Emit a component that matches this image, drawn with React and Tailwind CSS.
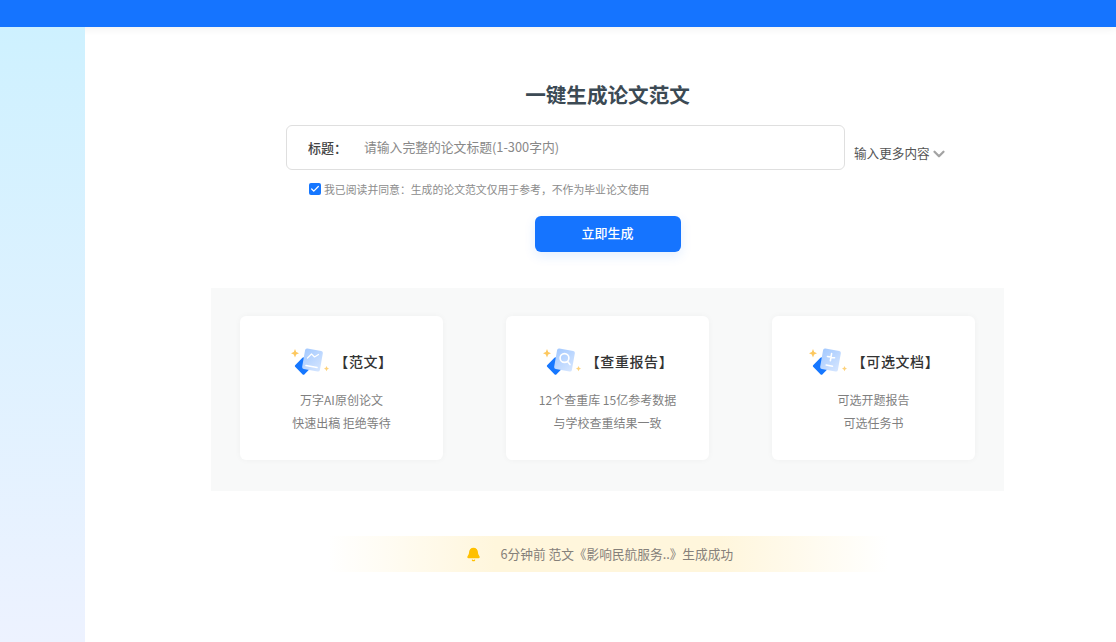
import { Bell, Check, ChevronDown } from 'lucide-react';

const cjk = { fontFamily: '"Noto Sans CJK SC", "Noto Sans", sans-serif' };

// 卡片图标：后面蓝色方块 + 前面浅蓝卡片 + 两个星星
function CardIcon({ kind }) {
    return (
        <svg width="40" height="28" viewBox="0 0 40 28" className="shrink-0">
            <defs>
                <linearGradient id={`card-${kind}`} x1="0" y1="0" x2="1" y2="1">
                    <stop offset="0" stopColor="#a3c9ff" />
                    <stop offset="1" stopColor="#d6e6ff" />
                </linearGradient>
            </defs>
            <path d="M5 2 L6.2 5 L9 6.2 L6.2 7.4 L5 10.4 L3.8 7.4 L1 6.2 L3.8 5 Z" fill="#fdc85f" />
            <path d="M36.5 19 L37.3 20.8 L39 21.6 L37.3 22.4 L36.5 24.2 L35.7 22.4 L34 21.6 L35.7 20.8 Z" fill="#fdd27c" />
            <rect x="7" y="12.5" width="13" height="13" rx="1.5" transform="rotate(45 13.5 19)" fill="#1677ff" />
            <rect x="13.5" y="2.5" width="18" height="21" rx="2" transform="rotate(10 22.5 13)" fill={`url(#card-${kind})`} />
            {kind === 'chart' && (
                <g fill="none" stroke="#fff" strokeWidth="1.2" strokeLinecap="round" strokeLinejoin="round">
                    <path d="M17.5 11 L21.5 7 L24.5 10 L28.5 7.5" />
                    <path d="M16 18.5 L27 20.5" strokeWidth="1.6" />
                </g>
            )}
            {kind === 'search' && (
                <g fill="none" stroke="#fff" strokeWidth="1.6" strokeLinecap="round">
                    <circle cx="22.5" cy="11" r="4.4" />
                    <path d="M25.6 14.6 L28 17.6" />
                </g>
            )}
            {kind === 'plus' && (
                <g fill="none" stroke="#fff" strokeWidth="1.6" strokeLinecap="round">
                    <path d="M19.5 9.5 L26.5 10.8 M23.6 6.6 L22.4 13.7" />
                    <path d="M18.2 18 L24.5 19.2" />
                </g>
            )}
        </svg>
    );
}

const cards = [
    { kind: 'chart', title: '【范文】', lines: ['万字AI原创论文', '快速出稿 拒绝等待'] },
    { kind: 'search', title: '【查重报告】', lines: ['12个查重库 15亿参考数据', '与学校查重结果一致'] },
    { kind: 'plus', title: '【可选文档】', lines: ['可选开题报告', '可选任务书'] },
];

export default function App() {
    return (
        <div className="flex flex-col h-[642px] overflow-hidden bg-white" style={cjk}>
            {/* 顶部栏 */}
            <div className="h-[27px] shrink-0 bg-[#1574ff] shadow-[0_2px_8px_rgba(0,0,0,0.06)]" />

            <div className="flex flex-1">
                {/* 左侧渐变栏 */}
                <div className="relative w-[85px] shrink-0 bg-gradient-to-b from-[#cef1ff] to-[#edf2ff]" />

                {/* 主内容 */}
                <div className="flex-1 pl-[126px]">
                    <div className="w-[793px]">
                        <h1 className="mt-[53px] h-[28px] text-center text-[20.6px] leading-[28px] font-bold text-[#3c4a54]">
                            一键生成论文范文
                        </h1>

                        <div className="mt-[17px] ml-[75px] flex items-start">
                            <div className="w-[559px] h-[45px] flex items-center rounded-[6px] border border-[#dfdfdf] bg-white">
                                <span className="ml-[21px] w-[56px] text-[13px] font-medium text-[#444]">标题：</span>
                                <span className="-mt-[2px] text-[12.8px] text-[#888]">请输入完整的论文标题(1-300字内)</span>
                            </div>
                            <div className="ml-[9px] mt-[17px] flex items-center text-[12.6px] leading-[18px] text-[#555]">
                                输入更多内容
                                <ChevronDown size={18} strokeWidth={3} className="mt-[3px] text-[#a3a3a3]" />
                            </div>
                        </div>

                        <div className="mt-[12px] ml-[98px] flex items-center h-[14px]">
                            <span className="w-[12px] h-[12px] rounded-[2px] bg-[#1677ff] flex items-center justify-center">
                                <Check size={10} strokeWidth={3} className="text-white" />
                            </span>
                            <span className="ml-[3px] text-[10.85px] text-[#8c8c8c]">
                                我已阅读并同意：生成的论文范文仅用于参考，不作为毕业论文使用
                            </span>
                        </div>

                        <div className="mt-[20px] flex justify-center">
                            <button className="w-[146px] h-[36px] pb-[2px] rounded-[6px] bg-[#1574ff] text-white text-[13px] font-medium shadow-[0_4px_12px_rgba(22,119,255,0.12)]">
                                立即生成
                            </button>
                        </div>

                        {/* 功能卡片 */}
                        <div className="mt-[36px] h-[203px] bg-[#f8f9f9] px-[29px] pt-[28px] flex justify-between">
                            {cards.map((card) => (
                                <div
                                    key={card.kind}
                                    className="w-[203px] h-[144px] rounded-[6px] bg-white shadow-[0_0_6px_rgba(0,0,0,0.04)] flex flex-col items-center"
                                >
                                    <div className="mt-[31px] h-[28px] flex items-center">
                                        <CardIcon kind={card.kind} />
                                        <span className="ml-[4px] text-[14px] tracking-[0.6px] font-medium text-[#333]">{card.title}</span>
                                    </div>
                                    <div className="mt-[13px] text-[12px] leading-[23px] text-[#7f7f7f] text-center">
                                        {card.lines.map((line) => (
                                            <div key={line}>{line}</div>
                                        ))}
                                    </div>
                                </div>
                            ))}
                        </div>

                        {/* 生成通知 */}
                        <div className="mt-[45px] mx-auto w-[560px] h-[36px] flex items-center bg-[linear-gradient(90deg,rgba(255,246,220,0),#fff6dc_30%,#fff6dc_70%,rgba(255,246,220,0))]">
                            <Bell size={15} fill="#ffc000" stroke="#ffc000" className="ml-[138px]" />
                            <span className="ml-[20px] text-[12.7px] text-[#85807a]">
                                6分钟前 范文《影响民航服务..》生成成功
                            </span>
                        </div>
                    </div>
                </div>
            </div>
        </div>
    );
}
